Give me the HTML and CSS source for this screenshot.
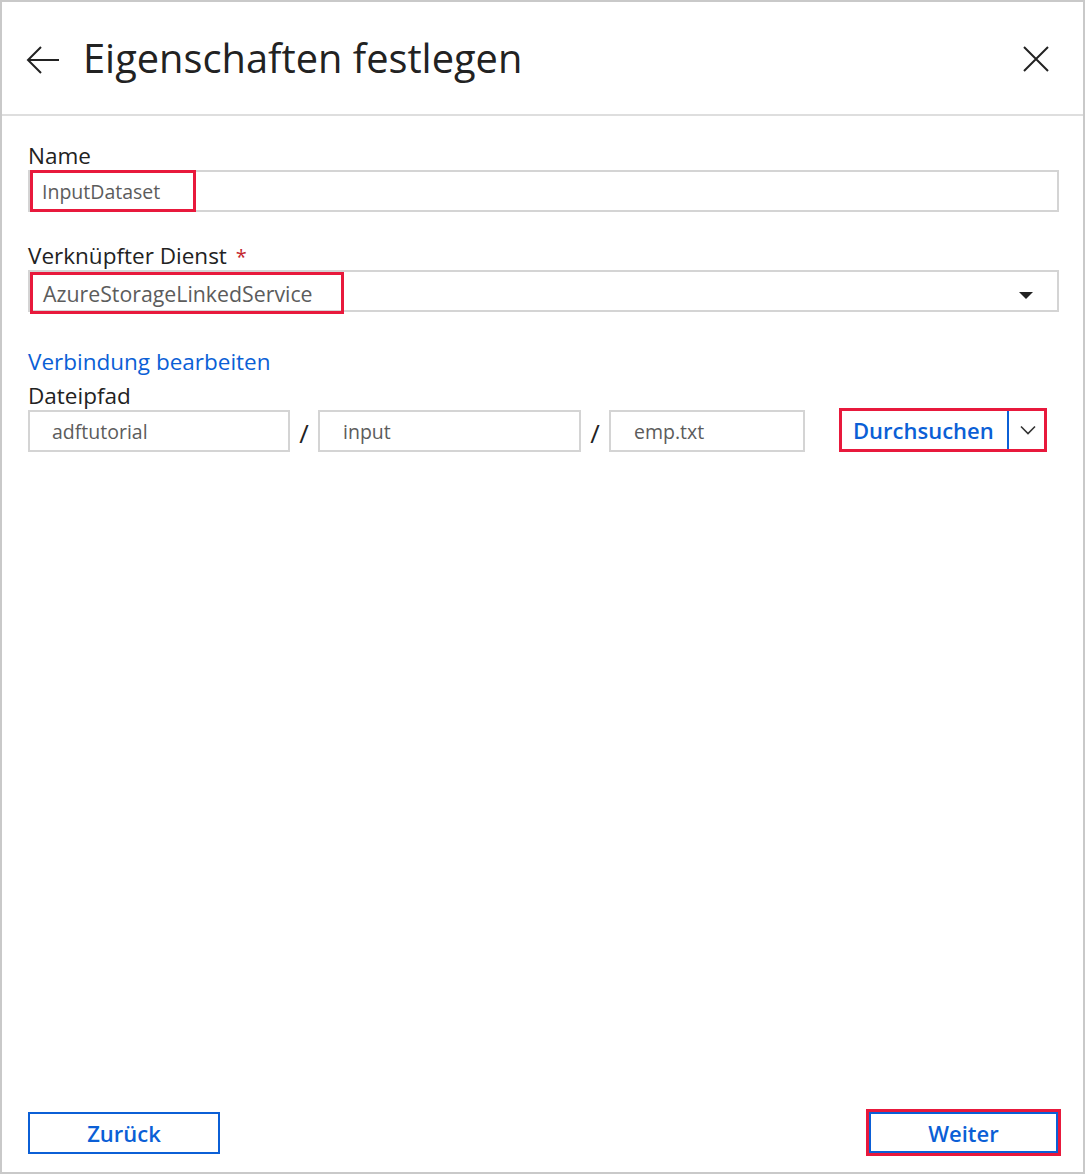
FILE: index.html
```html
<!DOCTYPE html>
<html lang="de">
<head>
<meta charset="utf-8">
<title>Eigenschaften festlegen</title>
<link rel="stylesheet" href="styles.css">
</head>
<body>
<div class="panel">
  <header class="header">
    <svg class="back" width="36" height="32" viewBox="0 0 36 32" aria-hidden="true">
      <path d="M34 16H3 M16 3L3 16L16 29" fill="none" stroke="#222" stroke-width="2"/>
    </svg>
    <h1 class="title">Eigenschaften festlegen</h1>
    <svg class="close" width="26" height="26" viewBox="0 0 26 26" aria-hidden="true">
      <path d="M1 1L25 25 M25 1L1 25" fill="none" stroke="#222" stroke-width="2"/>
    </svg>
  </header>
  <main class="content">
    <div class="field field-name">
      <label class="label">Name</label>
      <div class="input wide">
        <span class="hl hl-name">InputDataset</span>
      </div>
    </div>
    <div class="field">
      <label class="label">Verknüpfter Dienst <span class="req">*</span></label>
      <div class="input wide select">
        <span class="hl hl-svc">AzureStorageLinkedService</span>
        <span class="caret"></span>
      </div>
    </div>
    <a class="link" href="#">Verbindung bearbeiten</a>
    <label class="label path-label">Dateipfad</label>
    <div class="path-row">
      <div class="input seg seg1">adftutorial</div>
      <span class="slash">/</span>
      <div class="input seg seg2">input</div>
      <span class="slash">/</span>
      <div class="input seg seg3">emp.txt</div>
      <div class="browse">
        <span class="browse-text">Durchsuchen</span>
        <span class="browse-div"></span>
        <svg class="chev" width="16" height="10" viewBox="0 0 16 10" aria-hidden="true">
          <path d="M1 1.5L8 8.5L15 1.5" fill="none" stroke="#333" stroke-width="1.6"/>
        </svg>
      </div>
    </div>
  </main>
  <footer class="footer">
    <button class="btn">Zurück</button>
    <span class="btn-wrap"><button class="btn btn-next">Weiter</button></span>
  </footer>
</div>
</body>
</html>
```
FILE: styles.css
```css
* { box-sizing: border-box; }
html, body { margin: 0; padding: 0; background: #fff; }
body { font-family: "Open Sans", "Noto Sans", sans-serif; color: #222; }

.panel {
  width: 1085px;
  height: 1174px;
  border: 2px solid #c9c9c9;
  display: flex;
  flex-direction: column;
}

.header {
  height: 114px;
  border-bottom: 2px solid #dedede;
  display: flex;
  align-items: center;
  padding: 0 34px 0 23px;
  flex-shrink: 0;
}
.back { flex-shrink: 0; margin-top: 4px; }
.title {
  margin: 0 0 0 22px;
  font-weight: 400;
  font-size: 39.8px;
  color: #222;
  flex: 1;
  line-height: 1;
}
.close { flex-shrink: 0; margin-top: 2px; }

.content {
  flex: 1;
  padding: 26px 24px 0 26px;
  display: flex;
  flex-direction: column;
}

.field { display: flex; flex-direction: column; }
.field-name { margin-bottom: 30px; }
.label {
  font-size: 22.5px;
  line-height: 28px;
  color: #222;
  height: 28px;
}
.req { color: #c4262e; margin-left: 3px; font-size: 20px; }

.input {
  border: 2px solid #d4d4d4;
  height: 42px;
  display: flex;
  align-items: center;
  font-size: 19.5px;
  color: #5c5c5c;
}
.wide { width: 1031px; }

.hl {
  border: 3px solid #e8193c;
  height: 42px;
  display: flex;
  align-items: center;
  padding-left: 9px;
}
.hl-name { width: 166px; }
.hl-svc { width: 314px; margin-top: 4px; padding-left: 10px; font-size: 21.3px; }

.select { position: relative; }
.caret {
  position: absolute;
  right: 24px;
  top: 20px;
  width: 0; height: 0;
  border-left: 7px solid transparent;
  border-right: 7px solid transparent;
  border-top: 7px solid #222;
}

.link {
  font-size: 22.5px;
  line-height: 28px;
  color: #0b5fd6;
  text-decoration: none;
  margin-top: 36px;
  align-self: flex-start;
}
.path-label { margin-top: 6px; }

.path-row { display: flex; align-items: center; }
.seg { padding-left: 22px; }
.seg1 { width: 262px; }
.seg2 { width: 263px; padding-left: 23px; }
.seg3 { width: 196px; padding-left: 23px; }
.slash {
  width: 28px;
  text-align: center;
  font-size: 26px;
  color: #222;
  margin-top: 4px;
}

.browse {
  margin-left: 34px;
  border: 3px solid #e8193c;
  height: 44px;
  width: 208px;
  display: flex;
  align-items: center;
  margin-top: -2px;
}
.browse-text {
  font-size: 22px;
  font-weight: 600;
  color: #0b5fd6;
  padding-left: 11px;
  width: 165px;
  white-space: nowrap;
}
.browse-div { width: 2px; align-self: stretch; background: #0b5fd6; }
.chev { margin-left: 11px; }

.footer {
  height: 60px;
  flex-shrink: 0;
  display: flex;
  justify-content: space-between;
  align-items: flex-start;
  padding: 0 22px 0 26px;
}
.btn {
  font-family: inherit;
  width: 192px;
  height: 42px;
  border: 2px solid #0b5fd6;
  background: #fff;
  color: #0b5fd6;
  font-size: 22px;
  font-weight: 600;
  padding: 0;
}
.btn-wrap {
  border: 3px solid #e8193c;
  margin-top: -3px;
  display: flex;
}
.btn-next { width: 189px; height: 41px; }
```
